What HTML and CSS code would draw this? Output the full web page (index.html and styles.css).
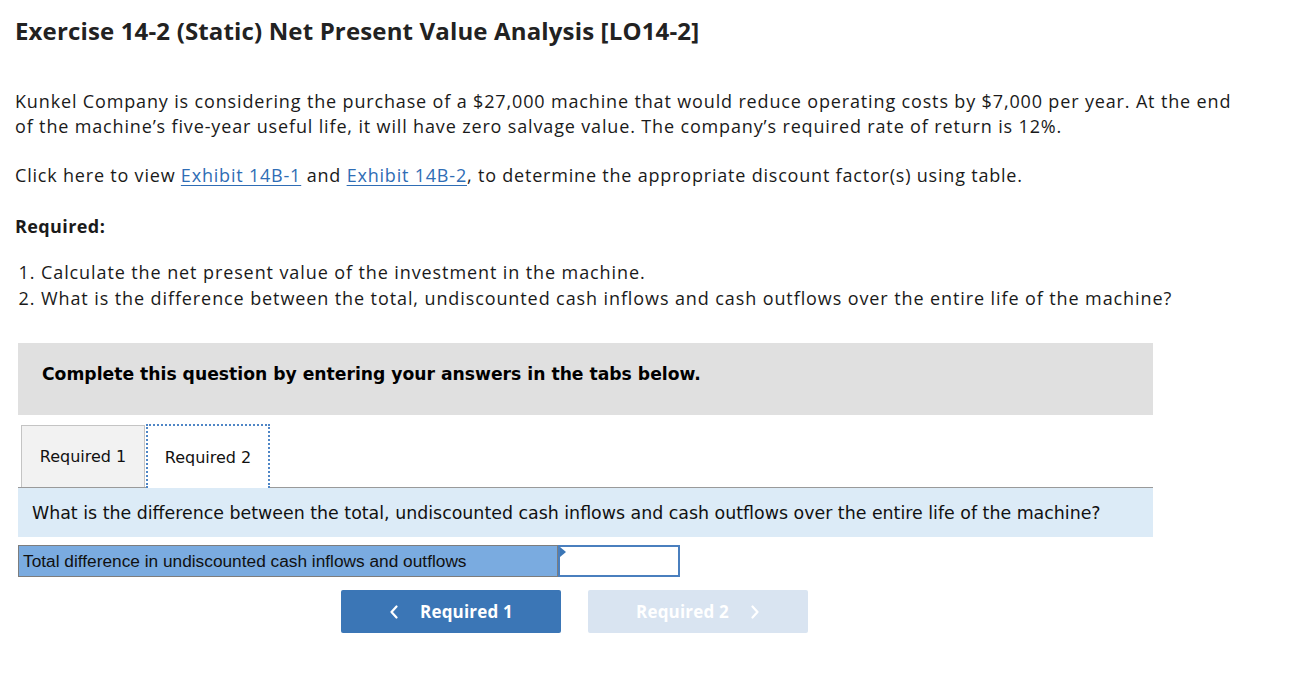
FILE: index.html
```html
<!DOCTYPE html>
<html>
<head>
<meta charset="utf-8">
<link rel="stylesheet" href="styles.css">
</head>
<body>
<div class="page">
  <h1 class="title">Exercise 14-2 (Static) Net Present Value Analysis [LO14-2]</h1>
  <p class="para">Kunkel Company is considering the purchase of a $27,000 machine that would reduce operating costs by $7,000 per year. At the end of the machine’s five-year useful life, it will have zero salvage value. The company’s required rate of return is 12%.</p>
  <p class="para click">Click here to view <a class="link">Exhibit 14B-1</a> and <a class="link">Exhibit 14B-2</a>, to determine the appropriate discount factor(s) using table.</p>
  <p class="req">Required:</p>
  <ol class="list">
    <li>Calculate the net present value of the investment in the machine.</li>
    <li>What is the difference between the total, undiscounted cash inflows and cash outflows over the entire life of the machine?</li>
  </ol>
  <div class="panel">
    <div class="banner">Complete this question by entering your answers in the tabs below.</div>
    <div class="tabs">
      <div class="tab">Required 1</div>
      <div class="tab active">Required 2</div>
    </div>
    <div class="question">What is the difference between the total, undiscounted cash inflows and cash outflows over the entire life of the machine?</div>
    <div class="answer">
      <div class="label">Total difference in undiscounted cash inflows and outflows</div>
      <div class="input"><span class="marker"></span></div>
    </div>
    <div class="nav">
      <div class="btn prev"><svg class="chev" width="10" height="14" viewBox="0 0 10 14"><polyline points="7.5,1.5 2.5,7 7.5,12.5" fill="none" stroke="#fff" stroke-width="2.2" stroke-linecap="round" stroke-linejoin="round"/></svg>Required 1</div>
      <div class="btn next">Required 2<svg class="chev" width="10" height="14" viewBox="0 0 10 14"><polyline points="2.5,1.5 7.5,7 2.5,12.5" fill="none" stroke="#fff" stroke-width="2.2" stroke-linecap="round" stroke-linejoin="round"/></svg></div>
    </div>
  </div>
</div>
</body>
</html>
```
FILE: styles.css
```css
html, body { margin: 0; padding: 0; background: #fff; }
.page {
  padding: 16px 15px 0 15px;
  font-family: "Open Sans", "Lato", sans-serif;
  color: #1a1a1a;
}
.title {
  margin: 0;
  font-size: 24px;
  font-weight: 700;
  line-height: 30px;
  color: #222;
  letter-spacing: 0.15px;
}
.para {
  margin: 43px 0 0 0;
  font-size: 18px;
  line-height: 25px;
  width: 1240px;
  letter-spacing: 0.85px;
}
.click { margin-top: 24px; letter-spacing: 0.8px; }
.link { color: #2f6db5; text-decoration: underline; text-underline-offset: 3px; }
.req {
  margin: 26px 0 0 0;
  font-size: 18px;
  font-weight: 700;
  line-height: 25px;
  letter-spacing: 0.4px;
}
.list {
  margin: 20px 0 0 0;
  padding-left: 26px;
  font-size: 18px;
  line-height: 26px;
  letter-spacing: 0.9px;
}
.panel {
  margin: 32px 0 0 3px;
  width: 1135px;
  font-family: "DejaVu Sans", Verdana, sans-serif;
}
.banner {
  background: #e0e0e0;
  height: 72px;
  box-sizing: border-box;
  padding: 20px 24px;
  font-size: 17.2px;
  font-weight: 700;
  line-height: 22px;
  color: #000;
}
.tabs {
  display: flex;
  margin-top: 10px;
  padding-left: 3px;
  border-bottom: 1px solid #9a9a9a;
  height: 62px;
  align-items: flex-end;
}
.tab {
  box-sizing: border-box;
  width: 124px;
  height: 62px;
  display: flex;
  align-items: center;
  justify-content: center;
  font-size: 16px;
  color: #111;
  background: #f2f2f2;
  border: 1px solid #c4c4c4;
  border-bottom: none;
}
.tab.active {
  background: #fff;
  height: 64px;
  margin-bottom: -1px;
  margin-left: 1px;
  border: 2px dotted #4f86c6;
  border-bottom: none;
}
.question {
  background: #dcebf7;
  height: 49px;
  box-sizing: border-box;
  padding: 14px 14px;
  font-size: 17.4px;
  line-height: 22px;
  color: #111;
}
.answer {
  display: flex;
  margin-top: 8px;
  height: 32px;
}
.label {
  box-sizing: border-box;
  width: 540px;
  background: #7aabe0;
  border: 1px solid #7d7d7d;
  font-family: "Liberation Sans", Arial, sans-serif;
  font-size: 17.3px;
  line-height: 30px;
  padding-left: 4px;
  color: #111;
}
.input {
  position: relative;
  box-sizing: border-box;
  width: 122px;
  border: 2px solid #4a7fbe;
  background: #fff;
}
.marker {
  position: absolute;
  left: 0;
  top: 0;
  width: 0;
  height: 0;
  border-top: 5px solid transparent;
  border-bottom: 5px solid transparent;
  border-left: 6px solid #3b76b6;
}
.nav {
  display: flex;
  gap: 27px;
  margin-top: 13px;
  padding-left: 323px;
}
.btn {
  width: 220px;
  height: 43px;
  border-radius: 2px;
  display: flex;
  align-items: center;
  justify-content: center;
  font-family: "Open Sans", "Lato", sans-serif;
  font-weight: 700;
  font-size: 17px;
  color: #fff;
  letter-spacing: 0.2px;
}
.btn.prev { background: #3b76b6; }
.btn.next { background: #d9e4f1; }
.chev { display: block; }
.prev .chev { margin-right: 21px; }
.next .chev { margin-left: 21px; }
```
